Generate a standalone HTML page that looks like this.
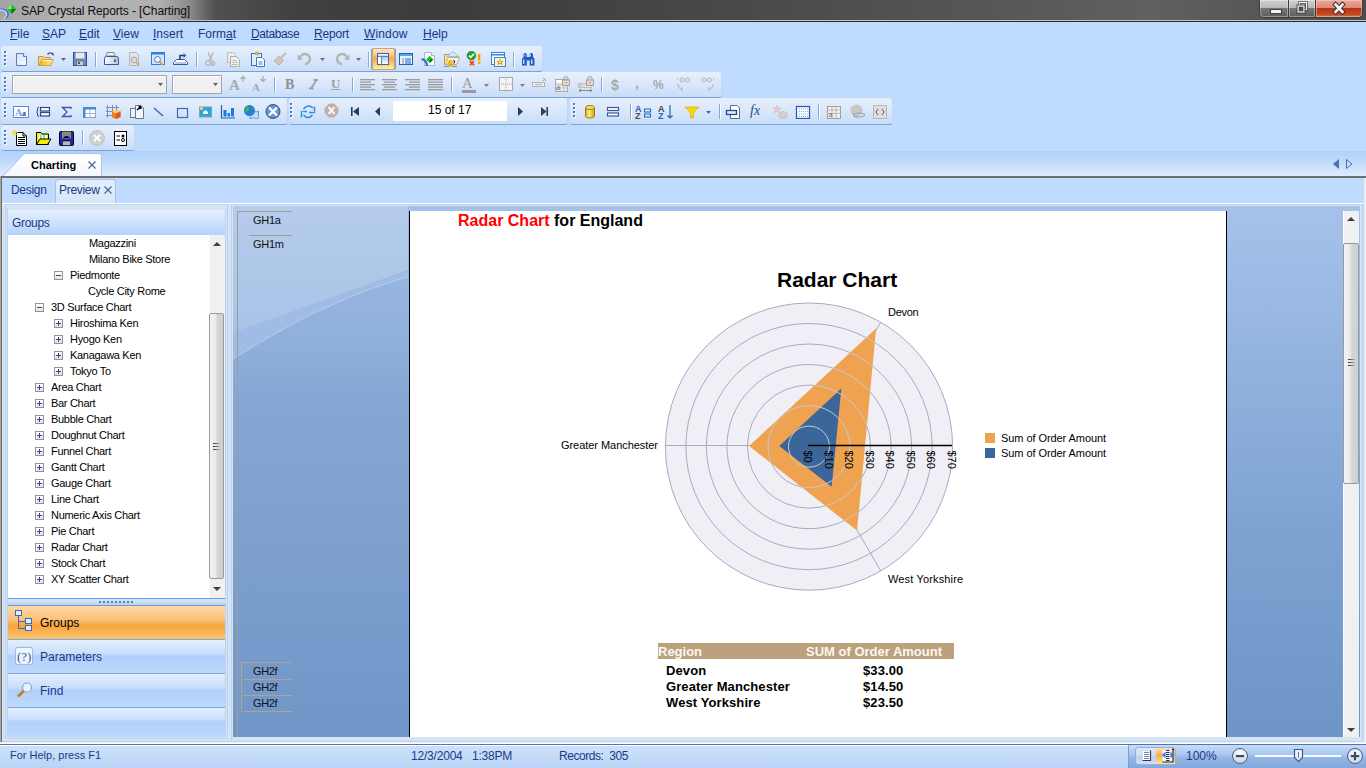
<!DOCTYPE html>
<html><head><meta charset="utf-8">
<style>
*{margin:0;padding:0;box-sizing:border-box}
html,body{width:1366px;height:768px;overflow:hidden;background:#BFDBFF;font-family:"Liberation Sans",sans-serif;position:relative}
.a{position:absolute}
.t{position:absolute;white-space:nowrap;line-height:1}
#title{left:0;top:0;width:1366px;height:20px;background:linear-gradient(90deg,#a4a4a4 0,#b4b4b4 80px,#b0b0b0 160px,#8a8a8a 190px,#505050 215px,#404040 300px,#3c3c3c 450px,#474747 700px,#575757 1000px,#606060 1150px,#4c4c4c 1366px)}
.menu{font-size:12px;color:#1a3580;top:28px}
.tb{position:absolute;border-radius:3px;background:linear-gradient(#e6f0fd 0,#dbe8fb 45%,#c8ddf9 100%);border-bottom:1px solid #79a2d9;border-right:1px solid #c3d6ef}
.grip{position:absolute;left:5px;width:3px;height:14px;background:repeating-linear-gradient(#4a7bc2 0 2px,transparent 2px 4px)}
.sep{position:absolute;width:1px;height:18px;background:#7ea3d8;border-right:1px solid #fff}
.tree{font-size:11px;color:#000;letter-spacing:-0.3px}
.pm{position:absolute;width:9px;height:9px;border:1px solid #939393;background:linear-gradient(#fff,#e4e4e4)}
.pm:before{content:"";position:absolute;left:1px;top:3px;width:5px;height:1px;background:#2d4b8a}
.pm.p:after{content:"";position:absolute;left:3px;top:1px;width:1px;height:5px;background:#2d4b8a}
.ic{position:absolute}
</style></head><body>
<!-- Title bar -->
<div id="title" class="a"></div>
<div class="a" style="left:0;top:20px;width:1366px;height:1px;background:#c4c4c4"></div>
<div class="a" style="left:0;top:21px;width:1366px;height:1px;background:#2a2a2a"></div>
<svg class="a" style="left:0;top:2px" width="18" height="18" viewBox="0 0 18 18">
<path d="M0 6.5Q7 6 9 11Q10 16 4 17Q8 13 6 10Q4 8 0 8Z" fill="#3a7ae8"/><path d="M0 8Q4 8 6 10Q8 13 4 17" fill="none" stroke="#e8f0ff" stroke-width="1"/>
<path d="M11.5 2L16 7L11.5 12L7 7Z" fill="#18c018"/><path d="M11.5 2L7 7H11.5Z" fill="#7ff07f"/><path d="M11.5 7L16 7L11.5 12Z" fill="#0a7a0a"/>
</svg>
<div class="t" style="left:21px;top:5px;font-size:12px;color:#0c0c14;letter-spacing:-0.11px">SAP Crystal Reports - [Charting]</div>
<!-- window buttons -->
<div class="a" style="left:1259px;top:-2px;width:104px;height:20px;border:1px solid #3a3a3a;border-radius:0 0 5px 5px;background:#3a3a3a"></div>
<div class="a" style="left:1260px;top:0;width:28px;height:17px;border-radius:0 0 0 4px;background:linear-gradient(#d0d0d0,#b8b8b8 45%,#767676 50%,#5e5e5e 100%);box-shadow:inset 0 0 0 1px rgba(255,255,255,.35)"></div>
<div class="a" style="left:1289px;top:0;width:26px;height:17px;background:linear-gradient(#d0d0d0,#b8b8b8 45%,#767676 50%,#5e5e5e 100%);box-shadow:inset 0 0 0 1px rgba(255,255,255,.35)"></div>
<div class="a" style="left:1316px;top:0;width:46px;height:17px;border-radius:0 0 4px 0;background:linear-gradient(#eba89a,#dd8a78 45%,#b83414 50%,#c84a22 85%,#d87a5a 100%);box-shadow:inset 0 0 0 1px rgba(255,220,200,.45)"></div>
<div class="a" style="left:1270px;top:9px;width:10px;height:3px;background:#f4f4f4;border:1px solid #444;box-sizing:content-box"></div>
<svg class="a" style="left:1295px;top:1px" width="14" height="13" viewBox="0 0 14 13"><rect x="4.5" y="1.5" width="7" height="7" fill="none" stroke="#333" stroke-width="2.4"/><rect x="4.5" y="1.5" width="7" height="7" fill="none" stroke="#f4f4f4" stroke-width="1.2"/><rect x="2" y="4" width="8" height="8" fill="#f4f4f4" stroke="#333" stroke-width="0.8"/><rect x="4" y="6" width="4" height="4" fill="#555" stroke="#333" stroke-width="0.6"/></svg>
<svg class="a" style="left:1331px;top:1px" width="16" height="15" viewBox="0 0 16 15"><path d="M4.5 3.5L11.5 11M11.5 3.5L4.5 11" stroke="#3a2e34" stroke-width="4.6" stroke-linecap="square"/><path d="M4.5 3.5L11.5 11M11.5 3.5L4.5 11" stroke="#f6f6f6" stroke-width="2.6" stroke-linecap="square"/></svg>
<!-- menu -->
<div class="a" style="left:0;top:22px;width:1366px;height:24px;background:#BFDBFF"></div>
<div class="t menu" style="left:10px"><u>F</u>ile</div>
<div class="t menu" style="left:42px"><u>S</u>AP</div>
<div class="t menu" style="left:79px"><u>E</u>dit</div>
<div class="t menu" style="left:113px"><u>V</u>iew</div>
<div class="t menu" style="left:153px"><u>I</u>nsert</div>
<div class="t menu" style="left:198px">Form<u>a</u>t</div>
<div class="t menu" style="left:251px;letter-spacing:-0.4px"><u>D</u>atabase</div>
<div class="t menu" style="left:314px;letter-spacing:-0.2px"><u>R</u>eport</div>
<div class="t menu" style="left:364px;letter-spacing:0.15px"><u>W</u>indow</div>
<div class="t menu" style="left:423px"><u>H</u>elp</div>

<!-- toolbars -->
<div class="tb" style="left:1px;top:46px;width:542px;height:26px"></div>
<div class="tb" style="left:1px;top:72px;width:721px;height:26px"></div>
<div class="tb" style="left:1px;top:98px;width:287px;height:27px"></div>
<div class="tb" style="left:289px;top:98px;width:279px;height:27px"></div>
<div class="tb" style="left:570px;top:98px;width:323px;height:27px"></div>
<div class="tb" style="left:1px;top:125px;width:134px;height:26px"></div>
<!-- ICONS START -->
<svg class="a" style="left:4px;top:51px" width="4" height="16" viewBox="0 0 4 16"><rect x="1" y="1" width="2" height="2" fill="#fff"/><rect x="0" y="0" width="2" height="2" fill="#4e79c0"/><rect x="1" y="5" width="2" height="2" fill="#fff"/><rect x="0" y="4" width="2" height="2" fill="#4e79c0"/><rect x="1" y="9" width="2" height="2" fill="#fff"/><rect x="0" y="8" width="2" height="2" fill="#4e79c0"/><rect x="1" y="13" width="2" height="2" fill="#fff"/><rect x="0" y="12" width="2" height="2" fill="#4e79c0"/></svg>
<svg class="a" style="left:14px;top:51px" width="16" height="16" viewBox="0 0 16 16"><path d="M2.5 2.5H9.5L12.5 5.5V14.5H2.5Z" fill="url(#gdoc)" stroke="#4f82cc"/><path d="M9.5 2.5V5.5H12.5" fill="#fff" stroke="#4f82cc"/><defs><linearGradient id="gdoc" x1="0" y1="0" x2="1" y2="1"><stop offset="0" stop-color="#d4e0f0"/><stop offset="1" stop-color="#fafcff"/></linearGradient></defs></svg>
<svg class="a" style="left:38px;top:51px" width="16" height="16" viewBox="0 0 16 16"><path d="M0.5 5.5H5.5L6.5 6.5H12.5V14.5H0.5Z" fill="#f2d48a" stroke="#c8974a"/><path d="M1 14.5L4 8.5H15.5L12.5 14.5Z" fill="url(#gfold)" stroke="#d0a050"/><path d="M4.5 9.5H14" stroke="#fff8d8"/><path d="M9.5 3.5Q12 0.5 14.5 3" fill="none" stroke="#2f5aa0" stroke-width="1.3"/><path d="M13 2.5L15.8 5.2L15.5 1.8Z" fill="#2f5aa0"/><defs><linearGradient id="gfold" x1="0" y1="0" x2="1" y2="0"><stop offset="0" stop-color="#f4b400"/><stop offset="1" stop-color="#ffe890"/></linearGradient></defs></svg>
<svg class="a" style="left:61px;top:58px" width="5" height="3" viewBox="0 0 5 3"><path d="M0 0H5L2.5 3Z" fill="#4a6aa0"/></svg>
<svg class="a" style="left:72px;top:51px" width="16" height="16" viewBox="0 0 16 16"><rect x="1.5" y="1.5" width="13" height="13" fill="#6a8cc8" stroke="#2f4f9a"/><rect x="3.5" y="1.5" width="9" height="6" fill="#e8e8e8"/><rect x="4.5" y="10" width="7" height="4.5" fill="#cfcfcf" stroke="#555" stroke-width="0.6"/><rect x="6" y="11" width="2" height="2" fill="#555"/></svg>
<div class="a" style="left:95px;top:52px;width:1px;height:15px;background:#88a9d8;box-shadow:1px 0 0 #fff"></div>
<svg class="a" style="left:103px;top:51px" width="16" height="16" viewBox="0 0 16 16"><path d="M4 1.5H11L12 5H3Z" fill="#e6eef8" stroke="#8b8b8b"/><path d="M1.5 7.5Q1.5 5.5 3.5 5.5H13.5Q15.5 5.5 15.5 7.5V13.5H1.5Z" fill="url(#gpr)" stroke="#2d5aa8"/><rect x="11" y="8" width="2" height="1.5" fill="#1cc81c"/><rect x="11" y="9.5" width="2" height="1.5" fill="#e01010"/><defs><linearGradient id="gpr" x1="0" x2="1"><stop offset="0" stop-color="#fff"/><stop offset="1" stop-color="#aac4e6"/></linearGradient></defs></svg>
<svg class="a" style="left:126px;top:51px" width="16" height="16" viewBox="0 0 16 16"><path d="M3.5 1.5H10L12.5 4V14.5H3.5Z" fill="#e4e4e4" stroke="#b4b4b4"/><circle cx="8" cy="9" r="3" fill="#d8d8d8" stroke="#a8a8a8"/><path d="M10.2 11.2L13 14" stroke="#bca88a" stroke-width="1.5"/></svg>
<svg class="a" style="left:150px;top:51px" width="16" height="16" viewBox="0 0 16 16"><rect x="1.5" y="1.5" width="13" height="12" fill="#cfe6fb" stroke="#2f7fe0"/><rect x="1.5" y="1.5" width="13" height="2" fill="#2f7fe0"/><circle cx="7.5" cy="8.5" r="3" fill="#e8f6ff" stroke="#5a7ac0"/><path d="M9.7 10.7L12.5 14" stroke="#e0a020" stroke-width="1.8"/></svg>
<svg class="a" style="left:172px;top:51px" width="16" height="16" viewBox="0 0 16 16"><path d="M1.5 13.5V11.5L4.5 8.5H12.5L15.5 11.5V13.5Z" fill="#fff" stroke="#2d5aa8"/><path d="M3 12H14" stroke="#6f95d0"/><path d="M8 9V4.5H12" fill="none" stroke="#1e3a70" stroke-width="1.5"/><path d="M11.5 2L14.5 4.5L11.5 7Z" fill="#2d6ac8"/></svg>
<div class="a" style="left:196px;top:52px;width:1px;height:15px;background:#88a9d8;box-shadow:1px 0 0 #fff"></div>
<svg class="a" style="left:203px;top:51px" width="16" height="16" viewBox="0 0 16 16"><path d="M10.5 1.5L6 10" stroke="#b4b4b4" stroke-width="1.4"/><path d="M5 1.5L9 10" stroke="#b4b4b4" stroke-width="1.4"/><ellipse cx="5" cy="12" rx="2.2" ry="2.3" fill="none" stroke="#b4b4b4" stroke-width="1.2"/><ellipse cx="10" cy="12.5" rx="1.8" ry="2.2" fill="#c8c8c8" stroke="#b4b4b4"/></svg>
<svg class="a" style="left:226px;top:51px" width="16" height="16" viewBox="0 0 16 16"><path d="M1.5 1.5H7.5L9.5 3.5V11.5H1.5Z" fill="#ececec" stroke="#bdbdbd"/><path d="M4.5 5.5H10.5L13.5 8.5V15.5H4.5Z" fill="#f0f0f0" stroke="#b0b0b0"/><path d="M6 9.5H11M6 11.5H12M6 13.5H12" stroke="#bdbdbd"/></svg>
<svg class="a" style="left:250px;top:51px" width="16" height="16" viewBox="0 0 16 16"><rect x="1.5" y="2.5" width="10" height="12" fill="#dff0fb" stroke="#3a6ac0"/><ellipse cx="7" cy="2.5" rx="2" ry="1.5" fill="#e8c040" stroke="#b08a20" stroke-width="0.6"/><path d="M6.5 6.5H12L14.5 9V15.5H6.5Z" fill="#fff" stroke="#3a78d8"/><path d="M8.5 11H12.5M8.5 13H12.5" stroke="#3a78d8"/></svg>
<svg class="a" style="left:273px;top:51px" width="16" height="16" viewBox="0 0 16 16"><path d="M1 10L6 14L10.5 9.5L6 5Z" fill="#cfc9bb" stroke="#b7b09e"/><path d="M8 7L13 2" stroke="#c4bdad" stroke-width="2"/></svg>
<svg class="a" style="left:297px;top:51px" width="16" height="16" viewBox="0 0 16 16"><path d="M3 7A5 5 0 1 1 8 13" fill="none" stroke="#b4b4b4" stroke-width="2.6"/><path d="M0.5 3.5V9H6Z" fill="#b4b4b4"/></svg>
<svg class="a" style="left:320px;top:58px" width="5" height="3" viewBox="0 0 5 3"><path d="M0 0H5L2.5 3Z" fill="#707070"/></svg>
<svg class="a" style="left:334px;top:51px" width="16" height="16" viewBox="0 0 16 16"><path d="M13 7A5 5 0 1 0 8 13" fill="none" stroke="#b4b4b4" stroke-width="2.6"/><path d="M15.5 3.5V9H10Z" fill="#b4b4b4"/></svg>
<svg class="a" style="left:356px;top:58px" width="5" height="3" viewBox="0 0 5 3"><path d="M0 0H5L2.5 3Z" fill="#707070"/></svg>
<div class="a" style="left:368px;top:52px;width:1px;height:15px;background:#88a9d8;box-shadow:1px 0 0 #fff"></div>
<div class="a" style="left:372px;top:48px;width:23px;height:22px;border:1px solid #c9a574;border-radius:2px;background:linear-gradient(#fde6c4 0,#fbc88a 30%,#f9a83e 45%,#fbc46a 70%,#fef0a0 100%);box-shadow:-1px 0 0 #7aa0d8,1px 0 0 #7aa0d8"></div>
<svg class="a" style="left:375px;top:51px" width="16" height="16" viewBox="0 0 16 16"><rect x="2.5" y="2.5" width="11" height="11" fill="#fff" stroke="#3a64b8"/><rect x="3" y="3" width="10" height="2.5" fill="url(#ghb)"/><path d="M3 5.5H13M6.5 5.5V13" stroke="#5a80c8"/><rect x="7" y="6" width="6" height="7" fill="url(#ghb2)"/><defs><linearGradient id="ghb" x1="0" y1="0" x2="0" y2="1"><stop offset="0" stop-color="#fff"/><stop offset="1" stop-color="#9ccaf4"/></linearGradient><linearGradient id="ghb2" x1="0" y1="0" x2="0" y2="1"><stop offset="0" stop-color="#a8c8f4"/><stop offset="1" stop-color="#fff"/></linearGradient></defs></svg>
<svg class="a" style="left:398px;top:51px" width="16" height="16" viewBox="0 0 16 16"><rect x="1.5" y="2.5" width="13" height="11" fill="#e6f4fc" stroke="#3a5ca8"/><rect x="2" y="3" width="12" height="2" fill="#4aa8e8"/><path d="M4 8H6M4 10H6M4 12H6" stroke="#8a8a8a"/><path d="M7 8H13M7 10H13M7 12H13" stroke="#2060d8" stroke-width="1.2"/></svg>
<svg class="a" style="left:421px;top:51px" width="16" height="16" viewBox="0 0 16 16"><path d="M3.5 1.5H10.5L13.5 4.5V14.5H3.5Z" fill="#f6f9fd" stroke="#a4b8d4"/><path d="M10.5 1.5V4.5H13.5" fill="#fff" stroke="#a4b8d4"/><path d="M8.7 4.8L12.3 8.4L8.7 12L5.1 8.4Z" fill="#1ec81e"/><path d="M8.7 8.4L12.3 8.4L8.7 12Z" fill="#0a6a0a"/><path d="M0.5 8.2Q5.5 8.3 6 14.8" fill="none" stroke="#2a62d8" stroke-width="2"/></svg>
<svg class="a" style="left:444px;top:51px" width="16" height="16" viewBox="0 0 16 16"><path d="M0.5 3.5H5L6 4.5H12V13.5H0.5Z" fill="#f8e4a8" stroke="#c8964a"/><path d="M3 5.5L9 0.5L14.5 5.5Z" fill="#c8f0f8" stroke="#78a8e8" stroke-dasharray="1 0.5"/><path d="M1.5 13.5L4 6.5H15.5L12.5 13.5Z" fill="#fff8e0" stroke="#d0a868"/><path d="M3 13L5 9Q8 8 9 11L8 13Z" fill="#f4b810"/><path d="M9 8.5Q12 9 11 12Q10 13 9 12.5Q10.5 10.5 9 8.5Z" fill="#1848b0"/><path d="M0 15.5H13" stroke="#909090" stroke-width="1.4"/><ellipse cx="6.5" cy="15.3" rx="2" ry="1.2" fill="#f0e020" stroke="#a08000" stroke-width="0.5"/></svg>
<svg class="a" style="left:466px;top:51px" width="16" height="16" viewBox="0 0 16 16"><circle cx="5.4" cy="4.6" r="4.4" fill="#2f9a2f" stroke="#1f6a1f" stroke-width="0.5"/><path d="M3 4.6L4.8 6.4L8 2.8" fill="none" stroke="#fff" stroke-width="1.6"/><path d="M3.8 10.2L8 14.2M8 10.2L3.8 14.2" stroke="#ff4010" stroke-width="1.8"/><rect x="12" y="3" width="2.4" height="6.6" fill="#f5a000"/><rect x="12" y="10.8" width="2.4" height="2" fill="#f5a000"/></svg>
<svg class="a" style="left:490px;top:51px" width="16" height="16" viewBox="0 0 16 16"><rect x="1.5" y="1.5" width="13" height="12" fill="#fff" stroke="#2f82e8"/><rect x="2" y="3" width="12" height="1.5" fill="#2f82e8"/><rect x="4.5" y="6.5" width="11" height="9" fill="#e4f8f8" stroke="#5a8a8a"/><path d="M10 7.5L11.1 10H13.8L11.7 11.6L12.5 14.3L10 12.7L7.5 14.3L8.3 11.6L6.2 10H8.9Z" fill="#f07a10"/><circle cx="10" cy="11" r="1.4" fill="#ffe040"/></svg>
<div class="a" style="left:513px;top:52px;width:1px;height:15px;background:#88a9d8;box-shadow:1px 0 0 #fff"></div>
<svg class="a" style="left:521px;top:51px" width="16" height="16" viewBox="0 0 16 16"><path d="M1 14.5V8.5Q1 6.5 2.5 6V3.5Q2.5 2 4 2Q5.8 2 5.8 3.5V14.5Z" fill="#1e5ac0"/><path d="M13.5 14.5V8.5Q13.5 6.5 12 6V3.5Q12 2 10.5 2Q8.7 2 8.7 3.5V14.5Z" fill="#1e5ac0"/><rect x="5.5" y="6" width="3.5" height="3.5" fill="#1e5ac0"/><path d="M2.8 8.5V13M10.8 8.5V13" stroke="#fff" stroke-width="1.1"/><path d="M4 3.5V5.5M9.5 3.5V5.5" stroke="#cfe0ff" stroke-width="0.9"/></svg>
<svg class="a" style="left:4px;top:77px" width="4" height="16" viewBox="0 0 4 16"><rect x="1" y="1" width="2" height="2" fill="#fff"/><rect x="0" y="0" width="2" height="2" fill="#4e79c0"/><rect x="1" y="5" width="2" height="2" fill="#fff"/><rect x="0" y="4" width="2" height="2" fill="#4e79c0"/><rect x="1" y="9" width="2" height="2" fill="#fff"/><rect x="0" y="8" width="2" height="2" fill="#4e79c0"/><rect x="1" y="13" width="2" height="2" fill="#fff"/><rect x="0" y="12" width="2" height="2" fill="#4e79c0"/></svg>
<div class="a" style="left:12px;top:75px;width:155px;height:19px;border:1px solid #a5a5a5;background:#f0f0f0;box-shadow:inset 1px 1px 0 #fff"></div>
<svg class="a" style="left:158px;top:83px" width="5" height="3" viewBox="0 0 5 3"><path d="M0 0H5L2.5 3Z" fill="#606060"/></svg>
<div class="a" style="left:172px;top:75px;width:50px;height:19px;border:1px solid #a5a5a5;background:#f0f0f0;box-shadow:inset 1px 1px 0 #fff"></div>
<svg class="a" style="left:213px;top:83px" width="5" height="3" viewBox="0 0 5 3"><path d="M0 0H5L2.5 3Z" fill="#606060"/></svg>
<div class="t" style="left:229px;top:78px;font-family:&quot;Liberation Serif&quot;;font-size:15px;font-weight:bold;color:#a8a8a8">A</div>
<svg class="a" style="left:240px;top:76px" width="6" height="7" viewBox="0 0 6 7"><path d="M3 6V2M0.5 3L3 0.5L5.5 3" fill="none" stroke="#a8a8a8" stroke-width="1.2"/></svg>
<div class="t" style="left:252px;top:82px;font-family:&quot;Liberation Serif&quot;;font-size:11px;font-weight:bold;color:#a8a8a8">A</div>
<svg class="a" style="left:260px;top:76px" width="6" height="7" viewBox="0 0 6 7"><path d="M3 0V4.5M0.5 3L3 5.5L5.5 3" fill="none" stroke="#a8a8a8" stroke-width="1.2"/></svg>
<div class="a" style="left:274px;top:77px;width:1px;height:15px;background:#88a9d8;box-shadow:1px 0 0 #fff"></div>
<div class="t" style="left:285px;top:78px;font-family:&quot;Liberation Serif&quot;;font-size:14px;font-weight:bold;color:#909090">B</div>
<svg class="a" style="left:306px;top:76px" width="16" height="16" viewBox="0 0 16 16"><path d="M7.5 4H12M3 12.5H7.5M10.5 4L5 12.5" fill="none" stroke="#a0a0a0" stroke-width="1.8"/></svg>
<div class="t" style="left:331px;top:77px;font-family:&quot;Liberation Serif&quot;;font-size:13px;font-weight:bold;color:#a0a0a0;text-decoration:underline">U</div>
<div class="a" style="left:352px;top:77px;width:1px;height:15px;background:#88a9d8;box-shadow:1px 0 0 #fff"></div>
<svg class="a" style="left:360px;top:78px" width="16" height="14" viewBox="0 0 16 14"><rect x="0" y="1.0" width="15" height="1.3" fill="#9a9a9a"/><rect x="0" y="3.5" width="11" height="1.3" fill="#9a9a9a"/><rect x="0" y="6.0" width="15" height="1.3" fill="#9a9a9a"/><rect x="0" y="8.5" width="11" height="1.3" fill="#9a9a9a"/><rect x="0" y="11.0" width="15" height="1.3" fill="#9a9a9a"/></svg>
<svg class="a" style="left:382px;top:78px" width="16" height="14" viewBox="0 0 16 14"><rect x="0" y="1.0" width="15" height="1.3" fill="#9a9a9a"/><rect x="2" y="3.5" width="11" height="1.3" fill="#9a9a9a"/><rect x="0" y="6.0" width="15" height="1.3" fill="#9a9a9a"/><rect x="2" y="8.5" width="11" height="1.3" fill="#9a9a9a"/><rect x="0" y="11.0" width="15" height="1.3" fill="#9a9a9a"/></svg>
<svg class="a" style="left:405px;top:78px" width="16" height="14" viewBox="0 0 16 14"><rect x="0" y="1.0" width="15" height="1.3" fill="#9a9a9a"/><rect x="4" y="3.5" width="11" height="1.3" fill="#9a9a9a"/><rect x="0" y="6.0" width="15" height="1.3" fill="#9a9a9a"/><rect x="4" y="8.5" width="11" height="1.3" fill="#9a9a9a"/><rect x="0" y="11.0" width="15" height="1.3" fill="#9a9a9a"/></svg>
<svg class="a" style="left:428px;top:78px" width="16" height="14" viewBox="0 0 16 14"><rect x="0" y="1.0" width="15" height="1.3" fill="#9a9a9a"/><rect x="0" y="3.5" width="15" height="1.3" fill="#9a9a9a"/><rect x="0" y="6.0" width="15" height="1.3" fill="#9a9a9a"/><rect x="0" y="8.5" width="15" height="1.3" fill="#9a9a9a"/><rect x="0" y="11.0" width="15" height="1.3" fill="#9a9a9a"/></svg>
<div class="a" style="left:451px;top:77px;width:1px;height:15px;background:#88a9d8;box-shadow:1px 0 0 #fff"></div>
<div class="t" style="left:462px;top:76px;font-family:&quot;Liberation Serif&quot;;font-size:15px;color:#9a9a9a">A</div>
<div class="a" style="left:462px;top:90px;width:14px;height:3px;background:#9d97ad"></div>
<svg class="a" style="left:484px;top:84px" width="5" height="3" viewBox="0 0 5 3"><path d="M0 0H5L2.5 3Z" fill="#808080"/></svg>
<svg class="a" style="left:498px;top:76px" width="16" height="16" viewBox="0 0 16 16"><rect x="1.5" y="1.5" width="13" height="13" fill="#f4f4f4" stroke="#a8a8a8"/><path d="M8 3V14M3 8H14" stroke="#a8a8a8" stroke-dasharray="1 1"/></svg>
<svg class="a" style="left:520px;top:84px" width="5" height="3" viewBox="0 0 5 3"><path d="M0 0H5L2.5 3Z" fill="#808080"/></svg>
<svg class="a" style="left:531px;top:76px" width="16" height="16" viewBox="0 0 16 16"><rect x="1.5" y="6.5" width="12" height="4" fill="#f0f0f0" stroke="#b0b0b0"/><path d="M4 8.5H11" stroke="#b0b0b0"/><path d="M12 2L15 5M15 2L12 5" stroke="#a0a0a0"/></svg>
<svg class="a" style="left:554px;top:76px" width="16" height="16" viewBox="0 0 16 16"><rect x="1.5" y="3.5" width="12" height="12" fill="#ececec" stroke="#a8a8a8"/><rect x="2" y="4" width="11" height="2" fill="#fff"/><path d="M1.5 8.5H13.5M1.5 12H13.5M6 8.5V15.5M10 8.5V15.5" stroke="#c4c4c4"/><text x="2.2" y="13.5" font-family="Liberation Serif" font-size="8" fill="#606060">a</text><path d="M10 4V2.5Q10 0.8 12 0.8Q14 0.8 14 2.5V4" fill="none" stroke="#a8a098" stroke-width="1.1"/><rect x="8.5" y="4" width="7" height="5.5" fill="#e0dad0" stroke="#a8a098"/><path d="M11 6.7H13" stroke="#a09890"/></svg>
<svg class="a" style="left:578px;top:76px" width="16" height="16" viewBox="0 0 16 16"><rect x="0.5" y="7.5" width="13" height="4" fill="url(#glk)" stroke="#c0c0c0"/><path d="M10 4V2.5Q10 0.8 12 0.8Q14 0.8 14 2.5V4" fill="none" stroke="#a8a098" stroke-width="1.1"/><rect x="8.5" y="4" width="7" height="5.5" fill="#e0dad0" stroke="#a8a098"/><path d="M11 6.7H13" stroke="#a09890"/><path d="M1 14.5H14M1 14.5L3 13M1 14.5L3 16M14 14.5L12 13M14 14.5L12 16" stroke="#8a8a8a"/><defs><linearGradient id="glk" x1="0" x2="1"><stop offset="0" stop-color="#c8c8c8"/><stop offset="1" stop-color="#f4f4f4"/></linearGradient></defs></svg>
<div class="a" style="left:601px;top:77px;width:1px;height:15px;background:#88a9d8;box-shadow:1px 0 0 #fff"></div>
<div class="t" style="left:611px;top:78px;font-size:14px;font-weight:bold;color:#a8a8a8">$</div>
<div class="t" style="left:635px;top:76px;font-size:14px;font-weight:bold;color:#a8a8a8">,</div>
<div class="t" style="left:653px;top:79px;font-size:12px;font-weight:bold;color:#a8a8a8">%</div>
<svg class="a" style="left:676px;top:76px" width="16" height="16" viewBox="0 0 16 16"><circle cx="6" cy="4" r="2" fill="none" stroke="#b0b0b0"/><circle cx="11.5" cy="4" r="2" fill="none" stroke="#b0b0b0"/><path d="M2 8Q2 13 6 13M6 11V15" fill="none" stroke="#b0b0b0"/><rect x="1" y="2" width="1.2" height="1.2" fill="#b0b0b0"/></svg>
<svg class="a" style="left:700px;top:76px" width="16" height="16" viewBox="0 0 16 16"><circle cx="4" cy="4" r="2" fill="none" stroke="#b0b0b0"/><circle cx="9.5" cy="4" r="2" fill="none" stroke="#b0b0b0"/><path d="M13 8Q13 13 9 13M9 11V15" fill="none" stroke="#b0b0b0"/><rect x="13" y="2" width="1.2" height="1.2" fill="#b0b0b0"/></svg>
<svg class="a" style="left:4px;top:103px" width="4" height="16" viewBox="0 0 4 16"><rect x="1" y="1" width="2" height="2" fill="#fff"/><rect x="0" y="0" width="2" height="2" fill="#4e79c0"/><rect x="1" y="5" width="2" height="2" fill="#fff"/><rect x="0" y="4" width="2" height="2" fill="#4e79c0"/><rect x="1" y="9" width="2" height="2" fill="#fff"/><rect x="0" y="8" width="2" height="2" fill="#4e79c0"/><rect x="1" y="13" width="2" height="2" fill="#fff"/><rect x="0" y="12" width="2" height="2" fill="#4e79c0"/></svg>
<svg class="a" style="left:13px;top:103px" width="16" height="16" viewBox="0 0 16 16"><rect x="0.5" y="3.5" width="15" height="11" fill="#fff" stroke="#5a8ad8"/><text x="2" y="13" font-family="Liberation Serif" font-size="10" font-weight="bold" fill="#7a9ad8">A</text><text x="9" y="13" font-family="Liberation Serif" font-size="8" font-weight="bold" fill="#2a4a90">a</text></svg>
<svg class="a" style="left:36px;top:103px" width="16" height="16" viewBox="0 0 16 16"><path d="M3 4Q1.5 4 1.5 6V8L0.5 9L1.5 10V12Q1.5 13.5 3 13.5" fill="none" stroke="#2a4a90"/><rect x="4.5" y="4.5" width="9" height="3.5" fill="#fff" stroke="#2a4a90" stroke-width="1.2"/><rect x="4.5" y="9.5" width="9" height="3.5" fill="#fff" stroke="#2a4a90" stroke-width="1.2"/></svg>
<svg class="a" style="left:59px;top:103px" width="16" height="16" viewBox="0 0 16 16"><path d="M12 6V4.5H3.5L8 9L3.5 13.5H12V12" fill="none" stroke="#3a5aa0" stroke-width="1.3"/></svg>
<svg class="a" style="left:82px;top:103px" width="16" height="16" viewBox="0 0 16 16"><rect x="1.5" y="4.5" width="12" height="10" fill="#fff" stroke="#9aa4b8"/><path d="M8 6.5V14M3.5 10.5H13" stroke="#8ac4d8"/><rect x="1" y="4" width="13" height="2.5" fill="#4a88d8"/><rect x="1" y="4" width="2.5" height="11" fill="#4a88d8"/></svg>
<svg class="a" style="left:106px;top:103px" width="16" height="16" viewBox="0 0 16 16"><path d="M1.5 2V14.5M6.5 2V14.5M10.5 2V11M0 4.5H13M0 8.5H13M0 12.5H7" stroke="#7a8cc0"/><path d="M6 8.5L10 6.5L14.5 8.5V14L10 16L6 14Z" fill="#f07830"/><path d="M6 8.5L10 6.5L14.5 8.5L10 10.5Z" fill="#fcd070"/><path d="M10 10.5V16L14.5 14V8.5Z" fill="#d85a20"/></svg>
<svg class="a" style="left:129px;top:103px" width="16" height="16" viewBox="0 0 16 16"><rect x="1.5" y="5.5" width="7" height="9" fill="#e8f2fc" stroke="#707890"/><path d="M6.5 2.5H12L14.5 5V15.5H6.5Z" fill="#f0f8ff" stroke="#707890"/><path d="M8 7L12 3.5M12 3.5H9.5M12 3.5V6" stroke="#000" stroke-width="1.4"/></svg>
<svg class="a" style="left:151px;top:103px" width="16" height="16" viewBox="0 0 16 16"><path d="M3 5L12 13" stroke="#3a6ab8" stroke-width="1.5"/></svg>
<svg class="a" style="left:174px;top:103px" width="16" height="16" viewBox="0 0 16 16"><rect x="3.5" y="5.5" width="10" height="9" fill="none" stroke="#3a6ab8" stroke-width="1.2"/></svg>
<svg class="a" style="left:197px;top:103px" width="16" height="16" viewBox="0 0 16 16"><rect x="2.5" y="4" width="12" height="10" fill="#1aa8e8" stroke="#9a9a9a"/><path d="M6 11V9L8.5 7L11 9V11Z" fill="#fff"/><circle cx="4.5" cy="5.5" r="1.5" fill="#ffe040"/></svg>
<svg class="a" style="left:220px;top:103px" width="16" height="16" viewBox="0 0 16 16"><path d="M1.5 2V15H15" fill="none" stroke="#2a5aa8" stroke-width="1.2"/><rect x="3.5" y="7" width="3" height="6.5" fill="#1e7ae0"/><rect x="7.5" y="10" width="2.5" height="3.5" fill="#1e7ae0"/><rect x="11" y="5" width="3" height="8.5" fill="#1e7ae0"/></svg>
<svg class="a" style="left:243px;top:103px" width="16" height="16" viewBox="0 0 16 16"><path d="M7 9L10 7.5L13 9L15.5 8V15L13 16L10 14.5L7 16Z" fill="#bde0f8" stroke="#4a8ad0" stroke-width="0.8"/><circle cx="6.5" cy="7.5" r="5.5" fill="#2a7ad8"/><path d="M4 3.5Q7 4 6 7Q4 8 3 10Q1.5 7 4 3.5Z" fill="#38c038"/><path d="M8 3Q11 4 11.5 7Q9.5 6 8 3Z" fill="#38c038"/></svg>
<svg class="a" style="left:265px;top:103px" width="16" height="16" viewBox="0 0 16 16"><circle cx="8" cy="8.5" r="7" fill="#4a78b8" stroke="#3a5a90"/><circle cx="8" cy="8.5" r="6" fill="#6f9ad0"/><path d="M4 4.5L12 12.5M12 4.5L4 12.5" stroke="#fff" stroke-width="2.2"/></svg>
<svg class="a" style="left:290px;top:103px" width="4" height="16" viewBox="0 0 4 16"><rect x="1" y="1" width="2" height="2" fill="#fff"/><rect x="0" y="0" width="2" height="2" fill="#4e79c0"/><rect x="1" y="5" width="2" height="2" fill="#fff"/><rect x="0" y="4" width="2" height="2" fill="#4e79c0"/><rect x="1" y="9" width="2" height="2" fill="#fff"/><rect x="0" y="8" width="2" height="2" fill="#4e79c0"/><rect x="1" y="13" width="2" height="2" fill="#fff"/><rect x="0" y="12" width="2" height="2" fill="#4e79c0"/></svg>
<svg class="a" style="left:300px;top:103px" width="16" height="16" viewBox="0 0 16 16"><path d="M3.5 6Q8 0.5 13 5" fill="none" stroke="#2f8ce0" stroke-width="1.6"/><path d="M14.5 3.5V9.5H9" fill="none" stroke="#2f8ce0" stroke-width="1.4"/><path d="M12.5 12Q8 17 3.5 12" fill="none" stroke="#2f8ce0" stroke-width="1.6"/><path d="M1.5 14.5V8.5H7" fill="none" stroke="#2f8ce0" stroke-width="1.4"/><path d="M11 6L14 9M5 11L2 8.5" stroke="#bfe6fa" stroke-width="1.2"/></svg>
<svg class="a" style="left:324px;top:102px" width="16" height="16" viewBox="0 0 16 16"><path d="M5 1.5H10L14.5 6V11L10 15.5H5L0.5 11V6Z" fill="#c2aeac"/><path d="M4.5 5L10.5 12M10.5 5L4.5 12" stroke="#f6f4f4" stroke-width="2.2"/></svg>
<svg class="a" style="left:349px;top:103px" width="16" height="16" viewBox="0 0 16 16"><rect x="2" y="4" width="1.6" height="9" fill="#2a3a5a"/><path d="M10 4V13L4 8.5Z" fill="#2a3a5a"/></svg>
<svg class="a" style="left:371px;top:103px" width="16" height="16" viewBox="0 0 16 16"><path d="M9 4V13L4 8.5Z" fill="#2a3a5a"/></svg>
<div class="a" style="left:393px;top:101px;width:114px;height:20px;background:#fff"></div>
<div class="t" style="left:428px;top:104px;font-size:12px;color:#000">15 of 17</div>
<svg class="a" style="left:514px;top:103px" width="16" height="16" viewBox="0 0 16 16"><path d="M4 4V13L9 8.5Z" fill="#2a3a5a"/></svg>
<svg class="a" style="left:538px;top:103px" width="16" height="16" viewBox="0 0 16 16"><path d="M3 4V13L8.5 8.5Z" fill="#3a3a5a"/><rect x="8.4" y="4" width="1.6" height="9" fill="#3a3a5a"/></svg>
<svg class="a" style="left:573px;top:103px" width="4" height="16" viewBox="0 0 4 16"><rect x="1" y="1" width="2" height="2" fill="#fff"/><rect x="0" y="0" width="2" height="2" fill="#4e79c0"/><rect x="1" y="5" width="2" height="2" fill="#fff"/><rect x="0" y="4" width="2" height="2" fill="#4e79c0"/><rect x="1" y="9" width="2" height="2" fill="#fff"/><rect x="0" y="8" width="2" height="2" fill="#4e79c0"/><rect x="1" y="13" width="2" height="2" fill="#fff"/><rect x="0" y="12" width="2" height="2" fill="#4e79c0"/></svg>
<svg class="a" style="left:582px;top:103px" width="16" height="16" viewBox="0 0 16 16"><path d="M3.5 4.5V13Q3.5 15 8 15Q12.5 15 12.5 13V4.5" fill="url(#gdb)" stroke="#a08010"/><ellipse cx="8" cy="4.5" rx="4.5" ry="2" fill="#f8e070" stroke="#a08010"/><defs><linearGradient id="gdb" x1="0" x2="1"><stop offset="0" stop-color="#d8a800"/><stop offset="0.4" stop-color="#fff080"/><stop offset="1" stop-color="#d0a000"/></linearGradient></defs></svg>
<svg class="a" style="left:605px;top:103px" width="16" height="16" viewBox="0 0 16 16"><rect x="2.5" y="4.5" width="11" height="3" fill="#fff" stroke="#3a5aa0" stroke-width="1.2"/><rect x="2.5" y="10" width="11" height="3" fill="#fff" stroke="#3a5aa0" stroke-width="1.2"/></svg>
<div class="a" style="left:630px;top:104px;width:1px;height:15px;background:#88a9d8;box-shadow:1px 0 0 #fff"></div>
<svg class="a" style="left:635px;top:103px" width="16" height="16" viewBox="0 0 16 16"><text x="0" y="9" font-size="9" font-weight="bold" fill="#2a60b8">A</text><text x="0" y="16" font-size="9" font-weight="bold" fill="#4a4a4a">Z</text><rect x="9.5" y="6" width="6" height="3" fill="none" stroke="#2a60b8"/><rect x="9.5" y="11" width="6" height="3" fill="none" stroke="#2a60b8"/></svg>
<svg class="a" style="left:658px;top:103px" width="16" height="16" viewBox="0 0 16 16"><text x="0" y="9" font-size="9" font-weight="bold" fill="#4a4a4a">A</text><text x="0" y="16" font-size="9" font-weight="bold" fill="#2a60b8">Z</text><path d="M12 2V15M9.5 12.5L12 15L14.5 12.5" fill="none" stroke="#2a60b8" stroke-width="1.2"/></svg>
<svg class="a" style="left:684px;top:103px" width="16" height="16" viewBox="0 0 16 16"><path d="M1 4H15L9.5 10V15H6.5V10Z" fill="#f8d800" stroke="#d0a800" stroke-width="0.6"/></svg>
<svg class="a" style="left:706px;top:111px" width="5" height="3" viewBox="0 0 5 3"><path d="M0 0H5L2.5 3Z" fill="#4a6aa0"/></svg>
<div class="a" style="left:719px;top:104px;width:1px;height:15px;background:#88a9d8;box-shadow:1px 0 0 #fff"></div>
<svg class="a" style="left:725px;top:103px" width="16" height="16" viewBox="0 0 16 16"><path d="M5.5 2.5H12L14.5 5V15.5H5.5Z" fill="#fff" stroke="#5a6a8a"/><rect x="1.5" y="7.5" width="10" height="4" fill="#dce8f8" stroke="#2a4a90" stroke-width="1.3"/></svg>
<div class="t" style="left:750px;top:104px;font-family:&quot;Liberation Serif&quot;;font-size:14px;font-style:italic;color:#2a4a90">fx</div>
<svg class="a" style="left:772px;top:103px" width="16" height="16" viewBox="0 0 16 16"><path d="M5 2L6 5H9L6.5 7L7.5 10L5 8L2.5 10L3.5 7L1 5H4Z" fill="#e8c8c8" stroke="#d0b0b0" stroke-width="0.5"/><path d="M7 10L11 8L15 10V14L11 16L7 14Z" fill="#d8d0c8" stroke="#c0b8b0" stroke-width="0.6"/></svg>
<svg class="a" style="left:795px;top:103px" width="16" height="16" viewBox="0 0 16 16"><rect x="1.5" y="3.5" width="13" height="12" fill="#fff" stroke="#2a5ab8" stroke-width="1.3"/><path d="M4 6H13M4 8.5H13M4 11H13M4 13.5H13" stroke="#7ab0e8" stroke-dasharray="1 1"/></svg>
<div class="a" style="left:818px;top:104px;width:1px;height:15px;background:#88a9d8;box-shadow:1px 0 0 #fff"></div>
<svg class="a" style="left:826px;top:103px" width="16" height="16" viewBox="0 0 16 16"><rect x="1.5" y="3.5" width="13" height="12" fill="#f0f0f0" stroke="#a0a0a0"/><path d="M1.5 7H14.5M1.5 10.5H14.5M6 3.5V15.5M10 3.5V15.5" stroke="#b8b8b8"/><text x="2.5" y="13.5" font-size="7" fill="#707070">a</text></svg>
<svg class="a" style="left:849px;top:103px" width="16" height="16" viewBox="0 0 16 16"><circle cx="7.5" cy="7.5" r="6" fill="#c8c8c8"/><ellipse cx="10" cy="12" rx="5.5" ry="2" fill="none" stroke="#a0a0a0" stroke-width="1.2"/></svg>
<svg class="a" style="left:872px;top:103px" width="16" height="16" viewBox="0 0 16 16"><rect x="1.5" y="2.5" width="13" height="13" fill="#ddd" stroke="#909090" stroke-dasharray="1 1"/><path d="M6 6L4 9L6 12M10 6L12 9L10 12" fill="none" stroke="#606060"/></svg>
<svg class="a" style="left:4px;top:130px" width="4" height="16" viewBox="0 0 4 16"><rect x="1" y="1" width="2" height="2" fill="#fff"/><rect x="0" y="0" width="2" height="2" fill="#4e79c0"/><rect x="1" y="5" width="2" height="2" fill="#fff"/><rect x="0" y="4" width="2" height="2" fill="#4e79c0"/><rect x="1" y="9" width="2" height="2" fill="#fff"/><rect x="0" y="8" width="2" height="2" fill="#4e79c0"/><rect x="1" y="13" width="2" height="2" fill="#fff"/><rect x="0" y="12" width="2" height="2" fill="#4e79c0"/></svg>
<svg class="a" style="left:12px;top:130px" width="16" height="16" viewBox="0 0 16 16"><path d="M4.5 2.5H11L14.5 6V15.5H4.5Z" fill="#fff" stroke="#000"/><path d="M11 2.5V6H14.5" fill="none" stroke="#000"/><path d="M6 7.5H13M6 9.5H13M6 11.5H13M6 13.5H13" stroke="#000"/><path d="M0.5 0.5L5 5M5 0.5L0.5 5M2.75 0V6M0 2.75H6" stroke="#f0d820" stroke-width="0.9"/></svg>
<svg class="a" style="left:35px;top:130px" width="16" height="16" viewBox="0 0 16 16"><path d="M1.5 2.5H6L7 4H13.5V14.5H1.5Z" fill="#f8f000" stroke="#000"/><rect x="4" y="5" width="8" height="4" fill="#fff"/><path d="M5 6H7M8 6H10M5 8H7M8 8H10" stroke="#1aa0a0"/><path d="M1.5 14.5L5 9H16L12.5 14.5Z" fill="#f8f000" stroke="#000"/></svg>
<svg class="a" style="left:58px;top:130px" width="16" height="16" viewBox="0 0 16 16"><rect x="1.5" y="1.5" width="14" height="14" rx="1" fill="#1e28b8" stroke="#000"/><rect x="4" y="1.5" width="9" height="7" fill="#888"/><path d="M5 8Q8.5 4 12 8Z" fill="#000"/><rect x="4.5" y="11" width="8" height="4.5" fill="#bbb" stroke="#000" stroke-width="0.6"/></svg>
<div class="a" style="left:82px;top:130px;width:1px;height:15px;background:#88a9d8;box-shadow:1px 0 0 #fff"></div>
<svg class="a" style="left:89px;top:130px" width="16" height="16" viewBox="0 0 16 16"><circle cx="8" cy="8" r="7.5" fill="#d0d0d0" stroke="#c0c0c0"/><path d="M5 5L11 11M11 5L5 11" stroke="#fff" stroke-width="2"/></svg>
<svg class="a" style="left:113px;top:130px" width="16" height="16" viewBox="0 0 16 16"><rect x="1.5" y="1.5" width="12" height="14" fill="#fff" stroke="#000"/><path d="M3.5 6H7M3.5 10H7" stroke="#000"/><circle cx="10" cy="6" r="1.5" fill="#000"/><circle cx="10" cy="10" r="1.5" fill="#fff" stroke="#000"/></svg>
<!-- ICONS END -->

<!-- tab strip -->
<div class="a" style="left:0;top:151px;width:1366px;height:25px;background:linear-gradient(#b2d2fb,#bcd8fb 35%,#d0e3fb 70%,#dfebfb)"></div>
<svg class="a" style="left:0;top:152px" width="110" height="25" viewBox="0 0 110 25"><path d="M2.5 24.5L24.5 1.5H99Q101.5 1.5 101.5 4V24.5" fill="url(#gtab)" stroke="#a9c3e6"/>
<defs><linearGradient id="gtab" x1="0" y1="0" x2="0" y2="1"><stop offset="0" stop-color="#ffffff"/><stop offset="1" stop-color="#f4f8fd"/></linearGradient></defs></svg>
<div class="t" style="left:31px;top:160px;font-size:11px;font-weight:bold;color:#000">Charting</div>
<svg class="a" style="left:87px;top:160px" width="10" height="10" viewBox="0 0 10 10"><path d="M1.5 1.5L8.5 8.5M8.5 1.5L1.5 8.5" stroke="#4a6a9a" stroke-width="1.3"/></svg>
<svg class="a" style="left:1331px;top:158px" width="24" height="12" viewBox="0 0 24 12"><path d="M8 1V11L2 6Z" fill="#4a72b4"/><path d="M15.5 1.5V10.5L21 6Z" fill="none" stroke="#4a72b4"/></svg>
<div class="a" style="left:0;top:176px;width:1366px;height:2px;background:#6f6f6f"></div>
<!-- design/preview row -->
<div class="a" style="left:2px;top:178px;width:1364px;height:25px;background:#BFDBFF"></div>
<div class="a" style="left:2px;top:203px;width:1364px;height:1px;background:#fff"></div>
<div class="a" style="left:0;top:176px;width:2px;height:566px;background:linear-gradient(90deg,#a8a8a8 0 1px,#6a6a66 1px 2px)"></div>
<div class="t" style="left:11px;top:184px;font-size:12px;color:#1a3a88;letter-spacing:-0.3px">Design</div>
<div class="a" style="left:55px;top:179px;width:61px;height:24px;border:1px solid #a4c2ea;border-bottom:none;border-radius:4px 4px 0 0;background:linear-gradient(#e6f0fc,#d6e5f8)"></div>
<div class="t" style="left:59px;top:184px;font-size:12px;color:#1a3a88;letter-spacing:-0.3px">Preview</div>
<svg class="a" style="left:103px;top:185px" width="10" height="10" viewBox="0 0 10 10"><path d="M1.5 1.5L8.5 8.5M8.5 1.5L1.5 8.5" stroke="#4a6a9a" stroke-width="1.3"/></svg>
<!-- LEFT PANEL -->
<div class="a" style="left:2px;top:204px;width:3px;height:534px;background:linear-gradient(90deg,#c6dcf6 0 1px,#d8e5f3 1px)"></div>
<div class="a" style="left:2px;top:204px;width:229px;height:538px;background:#d5e3f3;border-bottom:1px solid #b8d0ee"></div>
<div class="a" style="left:5px;top:204px;width:223px;height:535px;border:1px solid #bcd2f0;background:#d5e3f3"></div>
<div class="a" style="left:7px;top:209px;width:219px;height:528px;border:1px solid #bcd2f0;border-top:none"></div>
<div class="a" style="left:8px;top:210px;width:217px;height:25px;background:linear-gradient(#e5f0fe,#cfe2fb 50%,#b3d3fb)"></div>
<div class="t" style="left:12px;top:217px;font-size:12px;color:#1a3a88;letter-spacing:-0.3px">Groups</div>
<div class="a" style="left:8px;top:235px;width:217px;height:363px;background:#fff"></div>
<div class="t tree" style="left:89px;top:238px">Magazzini</div>
<div class="t tree" style="left:89px;top:254px">Milano Bike Store</div>
<div class="t tree" style="left:70px;top:270px">Piedmonte</div>
<div class="pm" style="left:54px;top:271px"></div>
<div class="t tree" style="left:88px;top:286px">Cycle City Rome</div>
<div class="t tree" style="left:51px;top:302px">3D Surface Chart</div>
<div class="pm" style="left:35px;top:303px"></div>
<div class="t tree" style="left:70px;top:318px">Hiroshima Ken</div>
<div class="pm p" style="left:54px;top:319px"></div>
<div class="t tree" style="left:70px;top:334px">Hyogo Ken</div>
<div class="pm p" style="left:54px;top:335px"></div>
<div class="t tree" style="left:70px;top:350px">Kanagawa Ken</div>
<div class="pm p" style="left:54px;top:351px"></div>
<div class="t tree" style="left:70px;top:366px">Tokyo To</div>
<div class="pm p" style="left:54px;top:367px"></div>
<div class="t tree" style="left:51px;top:382px">Area Chart</div>
<div class="pm p" style="left:35px;top:383px"></div>
<div class="t tree" style="left:51px;top:398px">Bar Chart</div>
<div class="pm p" style="left:35px;top:399px"></div>
<div class="t tree" style="left:51px;top:414px">Bubble Chart</div>
<div class="pm p" style="left:35px;top:415px"></div>
<div class="t tree" style="left:51px;top:430px">Doughnut Chart</div>
<div class="pm p" style="left:35px;top:431px"></div>
<div class="t tree" style="left:51px;top:446px">Funnel Chart</div>
<div class="pm p" style="left:35px;top:447px"></div>
<div class="t tree" style="left:51px;top:462px">Gantt Chart</div>
<div class="pm p" style="left:35px;top:463px"></div>
<div class="t tree" style="left:51px;top:478px">Gauge Chart</div>
<div class="pm p" style="left:35px;top:479px"></div>
<div class="t tree" style="left:51px;top:494px">Line Chart</div>
<div class="pm p" style="left:35px;top:495px"></div>
<div class="t tree" style="left:51px;top:510px">Numeric Axis Chart</div>
<div class="pm p" style="left:35px;top:511px"></div>
<div class="t tree" style="left:51px;top:526px">Pie Chart</div>
<div class="pm p" style="left:35px;top:527px"></div>
<div class="t tree" style="left:51px;top:542px">Radar Chart</div>
<div class="pm p" style="left:35px;top:543px"></div>
<div class="t tree" style="left:51px;top:558px">Stock Chart</div>
<div class="pm p" style="left:35px;top:559px"></div>
<div class="t tree" style="left:51px;top:574px">XY Scatter Chart</div>
<div class="pm p" style="left:35px;top:575px"></div>
<!-- tree scrollbar -->
<div class="a" style="left:209px;top:235px;width:16px;height:363px;background:#f0f0f0;border-left:1px solid #f8f8f8"></div>
<div class="a" style="left:209px;top:313px;width:15px;height:266px;border:1px solid #9a9a9a;border-radius:2px;background:linear-gradient(90deg,#f4f4f4,#e9e9e9 45%,#d6d6d6 55%,#cfcfcf)"></div>
<div class="a" style="left:213px;top:242px;width:0;height:0;border-left:4px solid transparent;border-right:4px solid transparent;border-bottom:4px solid #404040"></div>
<div class="a" style="left:213px;top:587px;width:0;height:0;border-left:4px solid transparent;border-right:4px solid transparent;border-top:4px solid #404040"></div>
<div class="a" style="left:213px;top:443px;width:7px;height:7px;background:repeating-linear-gradient(90deg,#333 0,#555 2px,#bbb 7px);-webkit-mask:repeating-linear-gradient(#000 0 1px,transparent 1px 3px);mask:repeating-linear-gradient(#000 0 1px,transparent 1px 3px)"></div>

<div class="a" style="left:8px;top:598px;width:217px;height:1px;background:#6d9bd8"></div>
<div class="a" style="left:8px;top:599px;width:217px;height:6px;background:linear-gradient(#d9e8fc,#b8d4f8)"></div>
<div class="a" style="left:99px;top:601px;width:34px;height:2px;background:repeating-linear-gradient(90deg,#5b7fb5 0 2px,transparent 2px 4px)"></div>
<div class="a" style="left:8px;top:605px;width:217px;height:1px;background:#6d9bd8"></div>
<!-- Groups (orange) -->
<div class="a" style="left:8px;top:606px;width:217px;height:34px;background:linear-gradient(#fdd9a6 0,#fbc27b 40%,#f9a33c 60%,#fbc771 100%);border-bottom:1px solid #7fa6d8"></div>
<div class="t" style="left:40px;top:617px;font-size:12px;color:#000">Groups</div>
<!-- Parameters -->
<div class="a" style="left:8px;top:640px;width:217px;height:34px;background:linear-gradient(#e3effe 0,#c8dffc 40%,#b0d0fb 50%,#bcd8fc 100%);border-bottom:1px solid #7fa6d8"></div>
<div class="t" style="left:40px;top:651px;font-size:12px;color:#1a3a88">Parameters</div>
<!-- Find -->
<div class="a" style="left:8px;top:674px;width:217px;height:34px;background:linear-gradient(#e3effe 0,#c8dffc 40%,#b0d0fb 50%,#bcd8fc 100%);border-bottom:1px solid #7fa6d8"></div>
<div class="t" style="left:40px;top:685px;font-size:12px;color:#1a3a88">Find</div>
<div class="a" style="left:8px;top:708px;width:217px;height:29px;background:linear-gradient(#e3effe 0,#c8dffc 40%,#b0d0fb 45%,#bcd8fc 100%)"></div>


<svg class="a" style="left:14px;top:609px" width="20" height="23" viewBox="0 0 20 23"><rect x="1.5" y="1.5" width="6" height="5" fill="#e4f0fc" stroke="#3a6ab8"/><path d="M4.5 6.5V19.5H11M4.5 12.5H11" fill="none" stroke="#3a6ab8"/><rect x="11.5" y="9.5" width="6" height="5" fill="#e4f0fc" stroke="#3a6ab8"/><rect x="11.5" y="16.5" width="6" height="5" fill="#e4f0fc" stroke="#3a6ab8"/></svg>
<svg class="a" style="left:14px;top:646px" width="20" height="20" viewBox="0 0 20 20"><rect x="1.5" y="1.5" width="17" height="17" rx="2" fill="#eef5fd" stroke="#9ab8e0"/><text x="3" y="14.5" font-family="Liberation Serif" font-size="13" fill="#3a5a9a">(?)</text></svg>
<svg class="a" style="left:16px;top:681px" width="18" height="18" viewBox="0 0 18 18"><circle cx="11" cy="6.5" r="4.5" fill="#e8f4ff" stroke="#8aa4c8" stroke-width="1.2"/><path d="M7.8 9.8L2 15.5" stroke="#c87a2a" stroke-width="2.6"/></svg>

<!-- gap between panels -->
<div class="a" style="left:228px;top:204px;width:3px;height:534px;background:#d5e4f3"></div>

<!-- PREVIEW PANEL -->
<div class="a" style="left:231px;top:204px;width:1132px;height:538px;background:#d5e4f3;border:1px solid #bcd2f0"></div>
<div id="pv" class="a" style="left:233px;top:206px;width:1127px;height:531px;background:linear-gradient(#a6c2ea,#7ea3d3 60%,#6e95c6)"></div>
<!-- group tree column -->
<div class="a" style="left:233px;top:206px;width:176px;height:531px;overflow:hidden;background:linear-gradient(#9cbae2 0,#90b0dc 25%,#86a7d5 36%,#80a2d0 55%,#7096c8 100%)">
  <svg width="175" height="531" style="position:absolute;left:0;top:0">
    <defs><linearGradient id="gcol" x1="0" y1="0" x2="0" y2="1"><stop offset="0" stop-color="#b5cceb"/><stop offset="1" stop-color="#a9c3e7"/></linearGradient></defs>
    <path d="M0 0H175V64L0 127Z" fill="url(#gcol)"/>
    <path d="M0 127L175 64V72Q90 95 0 153Z" fill="#a0bce4"/>
    <path d="M0 153Q90 95 176 70" stroke="#c8daf0" stroke-opacity="0.5" stroke-width="1.2" fill="none"/>
  </svg>
</div>
<div class="a" style="left:237px;top:211px;width:1px;height:526px;background:#a39e93"></div>
<div class="a" style="left:237px;top:211px;width:55px;height:1px;background:#a39e93"></div>
<div class="t" style="left:253px;top:215px;font-size:11px;color:#111;letter-spacing:-0.3px">GH1a</div>
<div class="a" style="left:249px;top:235px;width:43px;height:1px;background:#a39e93"></div>
<div class="t" style="left:253px;top:239px;font-size:11px;color:#111;letter-spacing:-0.3px">GH1m</div>
<div class="a" style="left:241px;top:662px;width:51px;height:49px;border-top:1px solid #b0a58c;border-left:1px solid #b0a58c"></div>
<div class="a" style="left:241px;top:679px;width:51px;height:1px;background:#b0a58c"></div>
<div class="a" style="left:241px;top:695px;width:51px;height:1px;background:#b0a58c"></div>
<div class="a" style="left:241px;top:711px;width:51px;height:1px;background:#b0a58c"></div>
<div class="t" style="left:253px;top:666px;font-size:11px;color:#111;letter-spacing:-0.4px">GH2f</div>
<div class="t" style="left:253px;top:682px;font-size:11px;color:#111;letter-spacing:-0.4px">GH2f</div>
<div class="t" style="left:253px;top:698px;font-size:11px;color:#111;letter-spacing:-0.4px">GH2f</div>

<!-- page -->
<div class="a" style="left:409px;top:211px;width:818px;height:526px;background:#fff;border-left:1px solid #000;border-right:1px solid #000"></div>


<!-- page content -->
<div class="t" style="left:458px;top:213px;font-size:16px;font-weight:bold;color:#000"><span style="color:#ff0000">Radar Chart</span> for England</div>
<svg class="a" style="left:0;top:0" width="1366" height="768" viewBox="0 0 1366 768">
<defs><clipPath id="cp"><polygon points="876.1,328.4 749.1,446.0 857.0,530.6"/></clipPath></defs>
<circle cx="809.0" cy="446.6" r="143.6" fill="#f0eff5"/>
<g fill="none" stroke="#aaa9c4" stroke-width="1"><circle cx="809.0" cy="446.6" r="20.51"/><circle cx="809.0" cy="446.6" r="41.03"/><circle cx="809.0" cy="446.6" r="61.54"/><circle cx="809.0" cy="446.6" r="82.06"/><circle cx="809.0" cy="446.6" r="102.57"/><circle cx="809.0" cy="446.6" r="123.09"/><circle cx="809.0" cy="446.6" r="143.60"/><line x1="808.2" y1="446.0" x2="880.8" y2="322.2"/><line x1="808.2" y1="446.0" x2="880.8" y2="571.0"/><line x1="808.2" y1="445.5" x2="665.4" y2="445.5"/></g>
<polygon points="876.1,328.4 749.1,446.0 857.0,530.6" fill="#efa24f"/>
<polygon points="841.3,388.6 779.3,446.0 831.7,486.7" fill="#3b6699"/>
<g fill="none" stroke="#c8c8d2" stroke-width="1" clip-path="url(#cp)"><circle cx="809.0" cy="446.6" r="20.51"/><circle cx="809.0" cy="446.6" r="41.03"/><circle cx="809.0" cy="446.6" r="61.54"/><circle cx="809.0" cy="446.6" r="82.06"/><circle cx="809.0" cy="446.6" r="102.57"/><circle cx="809.0" cy="446.6" r="123.09"/><circle cx="809.0" cy="446.6" r="143.60"/></g>
<line x1="808.2" y1="445.5" x2="952" y2="445.5" stroke="#000" stroke-width="1.4"/>
<g font-family="Liberation Sans" font-size="11" fill="#000"><text transform="translate(808.2,450.5) rotate(90)" x="0" y="4">$0</text><text transform="translate(828.7,450.5) rotate(90)" x="0" y="4">$10</text><text transform="translate(849.2,450.5) rotate(90)" x="0" y="4">$20</text><text transform="translate(869.7,450.5) rotate(90)" x="0" y="4">$30</text><text transform="translate(890.3,450.5) rotate(90)" x="0" y="4">$40</text><text transform="translate(910.8,450.5) rotate(90)" x="0" y="4">$50</text><text transform="translate(931.3,450.5) rotate(90)" x="0" y="4">$60</text><text transform="translate(951.8,450.5) rotate(90)" x="0" y="4">$70</text></g>
</svg>
<div class="t" style="left:777px;top:269px;font-size:21px;font-weight:bold;color:#000">Radar Chart</div>
<div class="t" style="left:888px;top:307px;font-size:11px;color:#000;letter-spacing:-0.3px">Devon</div>
<div class="t" style="left:561px;top:440px;font-size:11px;color:#000;letter-spacing:-0.05px">Greater Manchester</div>
<div class="t" style="left:888px;top:574px;font-size:11px;color:#000;letter-spacing:0.15px">West Yorkshire</div>
<div class="a" style="left:985px;top:433px;width:10px;height:10px;background:#efa24f"></div>
<div class="t" style="left:1001px;top:433px;font-size:11px;color:#000;letter-spacing:-0.07px">Sum of Order Amount</div>
<div class="a" style="left:985px;top:448px;width:10px;height:10px;background:#3b6699"></div>
<div class="t" style="left:1001px;top:448px;font-size:11px;color:#000;letter-spacing:-0.07px">Sum of Order Amount</div>
<div class="a" style="left:658px;top:643px;width:296px;height:16px;background:#bba27c"></div>
<div class="t" style="left:658px;top:645px;font-size:13px;font-weight:bold;color:#fbf7f0">Region</div>
<div class="t" style="left:806px;top:645px;font-size:13px;font-weight:bold;color:#fbf7f0">SUM of Order Amount</div>
<div class="t" style="left:666px;top:664px;font-size:13px;font-weight:bold;color:#000;letter-spacing:0.1px">Devon</div>
<div class="t" style="left:666px;top:680px;font-size:13px;font-weight:bold;color:#000;letter-spacing:0.1px">Greater Manchester</div>
<div class="t" style="left:666px;top:696px;font-size:13px;font-weight:bold;color:#000;letter-spacing:0.1px">West Yorkshire</div>
<div class="t" style="left:863px;top:664px;font-size:13px;font-weight:bold;color:#000;letter-spacing:0.1px">$33.00</div>
<div class="t" style="left:863px;top:680px;font-size:13px;font-weight:bold;color:#000;letter-spacing:0.1px">$14.50</div>
<div class="t" style="left:863px;top:696px;font-size:13px;font-weight:bold;color:#000;letter-spacing:0.1px">$23.50</div>

<!-- preview scrollbar -->
<div class="a" style="left:1343px;top:211px;width:16px;height:526px;background:#f0f0f0;border-left:1px solid #fff"></div>
<div class="a" style="left:1343px;top:243px;width:16px;height:241px;border:1px solid #9a9a9a;border-radius:2px;background:linear-gradient(90deg,#f4f4f4,#e9e9e9 45%,#d6d6d6 55%,#cfcfcf)"></div>
<div class="a" style="left:1347px;top:217px;width:0;height:0;border-left:4px solid transparent;border-right:4px solid transparent;border-bottom:4px solid #404040"></div>
<div class="a" style="left:1347px;top:728px;width:0;height:0;border-left:4px solid transparent;border-right:4px solid transparent;border-top:4px solid #404040"></div>
<div class="a" style="left:1348px;top:359px;width:7px;height:7px;background:repeating-linear-gradient(90deg,#333 0,#555 2px,#bbb 7px);-webkit-mask:repeating-linear-gradient(#000 0 1px,transparent 1px 3px);mask:repeating-linear-gradient(#000 0 1px,transparent 1px 3px)"></div>

<div class="a" style="left:1364px;top:178px;width:2px;height:564px;background:linear-gradient(90deg,#dfe6ee,#f6f6f6)"></div>
<!-- status bar -->
<div class="a" style="left:0;top:742px;width:1366px;height:2px;background:linear-gradient(#f2f2f0 50%,#fff 50%)"></div>
<div class="a" style="left:0;top:744px;width:1366px;height:1px;background:#4f76b2"></div>
<div class="a" style="left:0;top:745px;width:1366px;height:1px;background:#fff"></div>
<div class="a" style="left:0;top:746px;width:1366px;height:22px;background:linear-gradient(#cde0f8,#c4dbf8 50%,#b8d3f6)"></div>
<div class="t" style="left:10px;top:750px;font-size:11px;color:#1a3a88;letter-spacing:0px">For Help, press F1</div>
<div class="t" style="left:411px;top:750px;font-size:12px;color:#1a3a88;letter-spacing:-0.2px">12/3/2004&nbsp;&nbsp; 1:38PM</div>
<div class="t" style="left:559px;top:750px;font-size:12px;color:#1a3a88;letter-spacing:-0.45px">Records:&nbsp; 305</div>


<div class="a" style="left:1129px;top:745px;width:237px;height:23px;background:linear-gradient(#c6dcf8,#abc8f0 40%,#94b6e6 55%,#82a8dc)"></div>
<div class="a" style="left:1128px;top:745px;width:1px;height:23px;background:#7c9ed2"></div>
<div class="a" style="left:1135px;top:747px;width:41px;height:18px;border:1px solid #8fb0e0;border-radius:3px;background:linear-gradient(#dfeafa,#c8dcf5 50%,#b8d0f0 51%,#cfe0f6)"></div>
<div class="a" style="left:1156px;top:748px;width:19px;height:16px;background:linear-gradient(#fde0b0,#fbb04a 45%,#fbc060 65%,#fde49c)"></div>
<svg class="a" style="left:1142px;top:750px" width="10" height="12" viewBox="0 0 10 12"><rect x="0.5" y="0.5" width="8" height="10" fill="#fff" stroke="#c8d4e4" stroke-width="0.6"/><path d="M8.5 0.5V10.5H0.5" fill="none" stroke="#2a3a58" stroke-width="1.2"/><path d="M2 2.5H7M2 4.5H7M2 6.5H7M2 8.5H7" stroke="#7a84b8"/></svg>
<svg class="a" style="left:1161px;top:748px" width="14" height="15" viewBox="0 0 14 15"><rect x="1.5" y="1.5" width="11" height="12.5" fill="#f4f6fc" stroke="#d0d8e8" stroke-width="0.6"/><path d="M12 1V14H1.5" fill="none" stroke="#1e2a48" stroke-width="1.2"/><rect x="11.5" y="0.5" width="1.5" height="1.5" fill="#000"/><path d="M5 2.5H8.5M5 4.5H8.5M5 6.5H8.5M5 8.5H8.5M5 10.5H8.5M5 12.5H8.5" stroke="#2a3040"/><path d="M1 7L4.5 3.8V10.2Z" fill="#3a78d8"/><path d="M13 7L9.5 3.8V10.2Z" fill="#3a78d8"/></svg>
<div class="t" style="left:1186px;top:750px;font-size:12px;color:#1a3a88">100%</div>
<svg class="a" style="left:1231px;top:747px" width="18" height="18" viewBox="0 0 18 18"><circle cx="9" cy="9" r="7.5" fill="url(#gz)" stroke="#4a5e80"/><rect x="5" y="8" width="8" height="2.2" fill="#3a4a64"/>
<defs><radialGradient id="gz" cx="0.5" cy="0.3" r="0.7"><stop offset="0" stop-color="#ffffff"/><stop offset="1" stop-color="#c4d4ea"/></radialGradient></defs></svg>
<div class="a" style="left:1255px;top:755px;width:86px;height:2px;background:#f4f8ff"></div>
<svg class="a" style="left:1293px;top:748px" width="11" height="15" viewBox="0 0 11 15"><path d="M1.5 1.5H9.5V9.5L5.5 13.5L1.5 9.5Z" fill="#e8f0fb" stroke="#3a5a90" stroke-width="1.2"/><path d="M5.5 4V10" stroke="#6a7a98"/></svg>
<svg class="a" style="left:1346px;top:747px" width="18" height="18" viewBox="0 0 18 18"><circle cx="9" cy="9" r="7.5" fill="url(#gz)" stroke="#4a5e80"/><rect x="4.8" y="8" width="8.4" height="2.2" fill="#3a4a64"/><rect x="7.9" y="4.8" width="2.2" height="8.4" fill="#3a4a64"/></svg>

</body></html>
